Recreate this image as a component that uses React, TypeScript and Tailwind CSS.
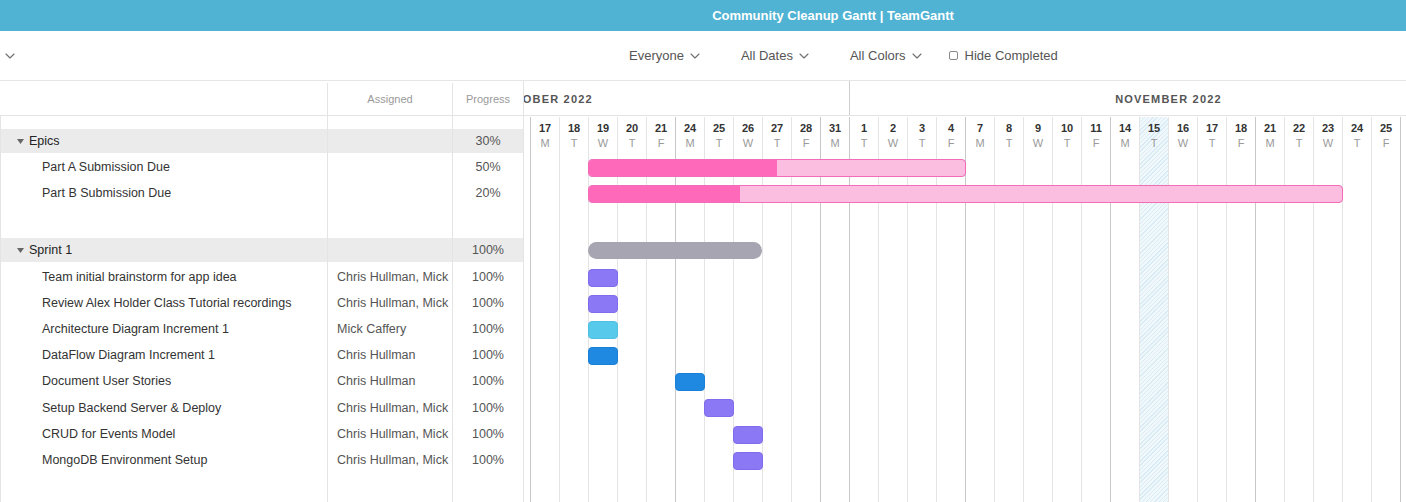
import { Fragment } from "react";

const COL = 29;
// columns that fall inside the gantt viewport (Oct 17 .. Nov 25)
const FIRST_VISIBLE = 10;
const LAST_VISIBLE = 39;

type Day = {
  d: number;
  w: string;
  strong: boolean;
  today: boolean;
};

// weekdays from Oct 3 to Nov 30, 2022 (index 0 = Oct 3)
function buildDays(): Day[] {
  const out: Day[] = [];
  const t = new Date(2022, 9, 3);
  const end = new Date(2022, 10, 30);
  let lastMonth = -1;
  while (t <= end) {
    const wd = t.getDay();
    if (wd !== 0 && wd !== 6) {
      const monthStart = t.getMonth() !== lastMonth;
      lastMonth = t.getMonth();
      out.push({
        d: t.getDate(),
        w: "SMTWTFS"[wd],
        strong: wd === 1 || monthStart,
        today: t.getMonth() === 10 && t.getDate() === 15,
      });
    }
    t.setDate(t.getDate() + 1);
  }
  return out;
}

const days = buildDays();

type Bar = {
  start: number;
  len: number;
  kind: "part" | "sprint" | "purple" | "cyan" | "blue";
  fill?: number;
};

type Row = {
  kind: "spacer" | "group" | "task" | "blank";
  h: string;
  name?: string;
  assigned?: string;
  progress?: string;
  bar?: Bar;
};

const rows: Row[] = [
  { kind: "spacer", h: "h-[12px]" },
  { kind: "group", h: "h-[26px]", name: "Epics", progress: "30%" },
  {
    kind: "task",
    h: "h-[26px]",
    name: "Part A Submission Due",
    progress: "50%",
    bar: { start: 12, len: 13, kind: "part", fill: 50 },
  },
  {
    kind: "task",
    h: "h-[26px]",
    name: "Part B Submission Due",
    progress: "20%",
    bar: { start: 12, len: 26, kind: "part", fill: 20 },
  },
  { kind: "blank", h: "h-[31px]" },
  {
    kind: "group",
    h: "h-[27px]",
    name: "Sprint 1",
    progress: "100%",
    bar: { start: 12, len: 6, kind: "sprint" },
  },
  {
    kind: "task",
    h: "h-[26px]",
    name: "Team initial brainstorm for app idea",
    assigned: "Chris Hullman, Mick",
    progress: "100%",
    bar: { start: 12, len: 1, kind: "purple" },
  },
  {
    kind: "task",
    h: "h-[26px]",
    name: "Review Alex Holder Class Tutorial recordings",
    assigned: "Chris Hullman, Mick",
    progress: "100%",
    bar: { start: 12, len: 1, kind: "purple" },
  },
  {
    kind: "task",
    h: "h-[26px]",
    name: "Architecture Diagram Increment 1",
    assigned: "Mick Caffery",
    progress: "100%",
    bar: { start: 12, len: 1, kind: "cyan" },
  },
  {
    kind: "task",
    h: "h-[26px]",
    name: "DataFlow Diagram Increment 1",
    assigned: "Chris Hullman",
    progress: "100%",
    bar: { start: 12, len: 1, kind: "blue" },
  },
  {
    kind: "task",
    h: "h-[26px]",
    name: "Document User Stories",
    assigned: "Chris Hullman",
    progress: "100%",
    bar: { start: 15, len: 1, kind: "blue" },
  },
  {
    kind: "task",
    h: "h-[27px]",
    name: "Setup Backend Server & Deploy",
    assigned: "Chris Hullman, Mick",
    progress: "100%",
    bar: { start: 16, len: 1, kind: "purple" },
  },
  {
    kind: "task",
    h: "h-[26px]",
    name: "CRUD for Events Model",
    assigned: "Chris Hullman, Mick",
    progress: "100%",
    bar: { start: 17, len: 1, kind: "purple" },
  },
  {
    kind: "task",
    h: "h-[26px]",
    name: "MongoDB Environment Setup",
    assigned: "Chris Hullman, Mick",
    progress: "100%",
    bar: { start: 17, len: 1, kind: "purple" },
  },
  { kind: "blank", h: "h-[60px]" },
];

function Chevron({ className = "" }: { className?: string }) {
  return (
    <svg
      width="10"
      height="6"
      viewBox="0 0 10 6"
      fill="none"
      className={className}
    >
      <polyline
        points="1,1 5,5 9,1"
        stroke="#6f6f6f"
        strokeWidth="1.1"
        strokeLinecap="round"
        strokeLinejoin="round"
      />
    </svg>
  );
}

function Caret() {
  return (
    <svg width="7" height="5" viewBox="0 0 7 5" className="mr-[5px]">
      <polygon points="0,0 7,0 3.5,5" fill="#666" />
    </svg>
  );
}

function Filter({ label }: { label: string }) {
  return (
    <div className="flex items-center gap-[6px]">
      <span>{label}</span>
      <Chevron />
    </div>
  );
}

function LeftRow({ row }: { row: Row }) {
  const group = row.kind === "group";
  const cell = group
    ? `h-full border-l border-[#e4e4e4] bg-[#ebebeb] bg-clip-content pt-[1px] ${
        row.h === "h-[27px]" ? "pb-[2px]" : "pb-[1px]"
      }`
    : "h-full border-l border-[#e4e4e4]";
  const txt = group ? "" : "pt-[1px]";
  return (
    <div className={`flex ${row.h}`}>
      <div className={`${cell} w-[327px] shrink-0`}>
        {group && (
          <div className="flex h-full items-center pl-[16px] text-[12.5px] text-[#222]">
            <Caret />
            {row.name}
          </div>
        )}
        {row.kind === "task" && (
          <div className="flex h-full items-center pl-[41px] pt-[1px] text-[12.5px] text-[#333]">
            {row.name}
          </div>
        )}
      </div>
      <div className={`${cell} w-[125px] shrink-0`}>
        {row.assigned && (
          <div className="flex h-full items-center overflow-hidden whitespace-nowrap pl-[9px] pt-[1px] text-[12.5px] text-[#555]">
            {row.assigned}
          </div>
        )}
      </div>
      <div className={`${cell} w-[71px] shrink-0`}>
        {row.progress && (
          <div
            className={`flex h-full items-center justify-center text-[12.5px] text-[#555] ${txt}`}
          >
            {row.progress}
          </div>
        )}
      </div>
    </div>
  );
}

function GanttBar({ bar }: { bar: Bar }) {
  const style = { marginLeft: bar.start * COL, width: bar.len * COL + 1 };
  if (bar.kind === "part") {
    return (
      <div
        style={style}
        className="h-[18px] overflow-hidden rounded-[4px] border border-[#f36cb7] bg-[#fbbde0]"
      >
        <div
          style={{ width: `${bar.fill}%` }}
          className="h-full bg-[#ff69b9]"
        />
      </div>
    );
  }
  if (bar.kind === "sprint") {
    return (
      <div
        style={{ marginLeft: bar.start * COL, width: bar.len * COL }}
        className="h-[17px] rounded-full bg-[#a6a5b1]"
      />
    );
  }
  const color =
    bar.kind === "purple"
      ? "bg-[#8b78f5] border-[#7f6cec]"
      : bar.kind === "cyan"
      ? "bg-[#57c9ea] border-[#4fc0e2]"
      : "bg-[#1f88e1] border-[#1a7fd6]";
  return (
    <div
      style={style}
      className={`h-[18px] rounded-[4px] border ${color}`}
    />
  );
}

export default function App() {
  return (
    <div className="h-[502px] w-[1406px] overflow-hidden bg-white font-['Liberation_Sans',Arial,sans-serif]">
      {/* title bar */}
      <div className="flex h-[31px] items-center justify-center bg-[#51b3d3] pl-[260px] text-[13px] font-bold text-white">
        Community Cleanup Gantt | TeamGantt
      </div>

      {/* toolbar */}
      <div className="flex h-[50px] items-center border-b border-[#e6e6e6] text-[13px] text-[#555]">
        <Chevron className="ml-[5px]" />
        <div className="ml-[614px] flex items-center gap-[41px]">
          <Filter label="Everyone" />
          <Filter label="All Dates" />
          <Filter label="All Colors" />
        </div>
        <div className="ml-[27px] flex items-center gap-[7px]">
          <span className="h-[9px] w-[9px] rounded-[2px] border border-[#8a8a8a]" />
          <span>Hide Completed</span>
        </div>
      </div>

      <div className="flex h-[421px]">
        {/* left panel */}
        <div className="w-[524px] shrink-0 overflow-hidden border-r border-[#e4e4e4]">
          <div className="flex h-[35px] border-b border-[#e4e4e4] pt-[2px] text-[11px] text-[#9a9a9a]">
            <div className="w-[327px] shrink-0" />
            <div className="flex w-[125px] shrink-0 items-center justify-center border-l border-[#e4e4e4]">
              Assigned
            </div>
            <div className="flex w-[71px] shrink-0 items-center justify-center border-l border-[#e4e4e4]">
              Progress
            </div>
          </div>
          {rows.map((r, i) => (
            <LeftRow key={i} row={r} />
          ))}
        </div>

        {/* gantt, scrolled so Oct 17 is the first full column */}
        <div className="min-w-0 flex-1 overflow-hidden">
          <div className="ml-[-284px] w-[1247px]">
            <div className="flex h-[35px] border-b border-[#e4e4e4] text-[11px] font-semibold tracking-[1.2px] text-[#555]">
              <div className="flex w-[609px] shrink-0 items-center justify-center pt-[2px]">
                OCTOBER 2022
              </div>
              <div className="flex w-[638px] shrink-0 items-center justify-center border-l border-[#cfcfcf] pt-[2px]">
                NOVEMBER 2022
              </div>
            </div>

            <div className="grid">
              <div className="col-start-1 row-start-1 flex h-[386px] pt-[1px]">
                {days.map((d, i) => (
                  <div
                    key={i}
                    className={`w-[29px] shrink-0 border-l text-center ${
                      d.strong ? "border-[#c9c9c9]" : "border-[#e4e4e4]"
                    } ${
                      d.today
                        ? "bg-[repeating-linear-gradient(135deg,#d9ebf5_0px,#d9ebf5_1px,#f1f8fc_1px,#f1f8fc_3px)]"
                        : ""
                    }`}
                  >
                    {i >= FIRST_VISIBLE && i <= LAST_VISIBLE && (
                      <>
                        <div className="pt-[5px] text-[11px] leading-[13px] font-bold text-[#333]">
                          {d.d}
                        </div>
                        <div className="pt-[2px] text-[11px] leading-[13px] text-[#9a9a9a]">
                          {d.w}
                        </div>
                      </>
                    )}
                  </div>
                ))}
              </div>

              <div className="col-start-1 row-start-1">
                {rows.map((r, i) => (
                  <Fragment key={i}>
                    <div className={`${r.h} pt-[5px]`}>
                      {r.bar && <GanttBar bar={r.bar} />}
                    </div>
                  </Fragment>
                ))}
              </div>
            </div>
          </div>
        </div>
      </div>
    </div>
  );
}
